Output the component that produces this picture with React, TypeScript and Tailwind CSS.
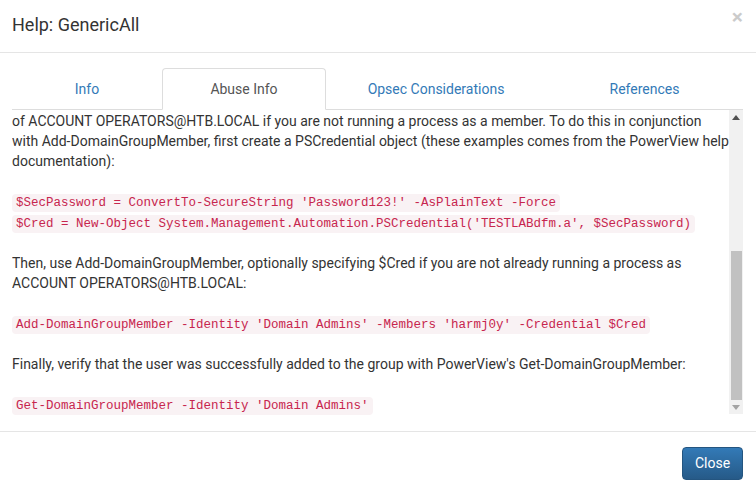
import React from "react";

const Code = ({ children }: { children: React.ReactNode }) => (
  <code className="rounded-[4px] bg-[#f9f2f4] px-[4px] py-[2px] font-['Liberation_Mono',monospace] text-[12.5px] leading-[18px] text-[#c7254e]">
    {children}
  </code>
);

const tabs = [
  { label: "Info", width: "w-[150px]" },
  { label: "Abuse Info", width: "w-[164px]", active: true },
  { label: "Opsec Considerations", width: "w-[220px]" },
  { label: "References", width: "flex-1" },
];

export default function App() {
  return (
    <div className="flex h-[492px] w-[756px] flex-col overflow-hidden bg-white font-['Roboto',sans-serif] text-[#333]">
      {/* Header */}
      <div className="flex h-[53px] shrink-0 items-start justify-between border-b border-[#e5e5e5] pl-3 pr-[13px]">
        <h4 className="pt-[12px] text-[18px] leading-[26px]">Help: GenericAll</h4>
        <button className="pt-[7px] text-[21px] font-bold leading-[21px] text-black opacity-20">
          ×
        </button>
      </div>

      {/* Body */}
      <div className="flex shrink-0 flex-col pb-[16px] pl-3 pr-[13px] pt-[15px]">
        <ul className="flex h-[42px] border-b border-[#ddd] text-[14px] leading-[20px]">
          {tabs.map((t) =>
            t.active ? (
              <li
                key={t.label}
                className={`${t.width} -mb-px flex items-center justify-center rounded-t-[4px] border border-[#ddd] border-b-white bg-white text-[#555]`}
              >
                {t.label}
              </li>
            ) : (
              <li
                key={t.label}
                className={`${t.width} flex items-center justify-center text-[#337ab7]`}
              >
                {t.label}
              </li>
            )
          )}
        </ul>

        <div className="flex h-[305px]">
          <div className="flex flex-1 flex-col justify-end overflow-hidden text-[14px] leading-[20px]">
            <div>
              of ACCOUNT OPERATORS@HTB.LOCAL if you are not running a process as a member. To do this
              in conjunction with Add-DomainGroupMember, first create a PSCredential object (these
              examples comes from the PowerView help documentation):
              <br />
              <br />
              <Code>$SecPassword = ConvertTo-SecureString 'Password123!' -AsPlainText -Force</Code>
              <br />
              <Code>
                $Cred = New-Object System.Management.Automation.PSCredential('TESTLABdfm.a',
                $SecPassword)
              </Code>
              <br />
              <br />
              Then, use Add-DomainGroupMember, optionally specifying $Cred if you are not already
              running a process as ACCOUNT OPERATORS@HTB.LOCAL:
              <br />
              <br />
              <Code>
                Add-DomainGroupMember -Identity 'Domain Admins' -Members 'harmj0y' -Credential $Cred
              </Code>
              <br />
              <br />
              Finally, verify that the user was successfully added to the group with PowerView's
              Get-DomainGroupMember:
              <br />
              <br />
              <Code>Get-DomainGroupMember -Identity 'Domain Admins'</Code>
            </div>
          </div>

          {/* Scrollbar */}
          <div className="flex h-[304px] w-[14px] shrink-0 flex-col bg-[#f1f1f1]">
            <div className="flex h-[15px] items-center justify-center">
              <svg width="8" height="5" viewBox="0 0 8 5">
                <path d="M0 5 L4 0 L8 5 Z" fill="#505050" />
              </svg>
            </div>
            <div className="flex flex-1 flex-col justify-end pl-[2px] pr-[1px]">
              <div className="h-[149px] bg-[#c1c1c1]" />
            </div>
            <div className="flex h-[14px] items-center justify-center">
              <svg width="8" height="5" viewBox="0 0 8 5">
                <path d="M0 0 L8 0 L4 5 Z" fill="#a3a3a3" />
              </svg>
            </div>
          </div>
        </div>
      </div>

      {/* Footer */}
      <div className="flex shrink-0 justify-end border-t border-[#e5e5e5] pr-[13px] pt-[15px]">
        <button className="h-[33px] w-[61px] rounded-[4px] border border-[#245580] bg-gradient-to-b from-[#337ab7] to-[#265a88] text-[14px] text-white">
          Close
        </button>
      </div>
    </div>
  );
}
